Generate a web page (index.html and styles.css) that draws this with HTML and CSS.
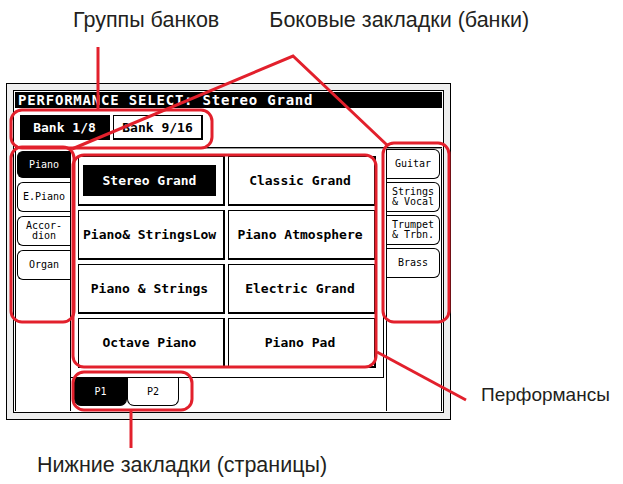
FILE: index.html
```html
<!DOCTYPE html>
<html lang="ru">

<head>
    <meta charset="UTF-8">
    <meta name="viewport" content="width=device-width, initial-scale=1.0">
    <title>Performance Select</title>
    <link rel="stylesheet" href="styles.css">
</head>

<body>
    <div class="page">
        <div class="top-labels">
            <span class="label label-groups">Группы банков</span>
            <span class="label label-side">Боковые закладки (банки)</span>
        </div>

        <div class="middle">
            <div class="screen">
                <div class="panel">
                    <div class="title">PERFORMANCE SELECT: Stereo Grand</div>

                    <div class="banks">
                        <div class="bank active">Bank 1/8</div>
                        <div class="bank">Bank 9/16</div>
                    </div>

                    <div class="body">
                        <div class="side side-left">
                            <div class="tab tab-first active">Piano</div>
                            <div class="tab">E.Piano</div>
                            <div class="tab">Accor-<br>dion</div>
                            <div class="tab">Organ</div>
                        </div>

                        <div class="main">
                            <div class="grid-wrap">
                                <div class="grid">
                                    <div class="cell selected"><span>Stereo Grand</span></div>
                                    <div class="cell"><span>Classic Grand</span></div>
                                    <div class="cell"><span>Piano&amp; StringsLow</span></div>
                                    <div class="cell"><span>Piano Atmosphere</span></div>
                                    <div class="cell"><span>Piano &amp; Strings</span></div>
                                    <div class="cell"><span>Electric Grand</span></div>
                                    <div class="cell"><span>Octave Piano</span></div>
                                    <div class="cell"><span>Piano Pad</span></div>
                                </div>
                            </div>
                            <div class="pages">
                                <div class="page-tab active">P1</div>
                                <div class="page-tab">P2</div>
                            </div>
                        </div>

                        <div class="side side-right">
                            <div class="tab">Guitar</div>
                            <div class="tab">Strings<br>&amp; Vocal</div>
                            <div class="tab">Trumpet<br>&amp; Trbn.</div>
                            <div class="tab">Brass</div>
                        </div>
                    </div>
                </div>
            </div>
            <span class="label label-perf">Перформансы</span>
        </div>

        <div class="bottom-label">
            <span class="label">Нижние закладки (страницы)</span>
        </div>

        <!-- red callouts drawn over the screen -->
        <svg class="callouts" viewBox="0 0 623 484" width="623" height="484">
            <line x1="98" y1="47" x2="98" y2="110" />
            <polyline points="72,149 293,56 387,145" />
            <rect x="11" y="110" width="201" height="38" rx="11" />
            <rect x="11" y="147" width="63" height="175" rx="11" />
            <rect x="383" y="143" width="66" height="179" rx="11" />
            <rect x="73" y="155" width="303" height="212" rx="11" />
            <rect x="73" y="372" width="119" height="38" rx="11" />
            <line x1="131" y1="410" x2="131" y2="448" />
            <line x1="377" y1="352" x2="466" y2="400" />
        </svg>
    </div>
</body>

</html>
```

FILE: styles.css
```css
body {
    margin: 0;
    background: #fff;
    font-family: "Liberation Sans", Arial, sans-serif;
}

.page {
    position: relative;
    width: 623px;
    height: 484px;
    overflow: hidden;
}

.label {
    font-size: 21.5px;
    line-height: 20px;
    color: #231f20;
    white-space: nowrap;
}

.top-labels {
    display: flex;
    height: 83px;
    box-sizing: border-box;
    padding: 10px 0 0 73px;
}

.label-side {
    margin-left: 50px;
}

.middle {
    display: flex;
    align-items: flex-start;
}

.label-perf {
    font-size: 19px;
    margin: 302px 0 0 30px;
}

.bottom-label {
    padding: 35px 0 0 37px;
}

/* LCD screen */

.screen {
    box-sizing: border-box;
    width: 445px;
    height: 337px;
    margin-left: 6px;
    padding: 6px;
    border: 1px solid #000;
    background: #eee;
}

.panel {
    box-sizing: border-box;
    height: 100%;
    padding: 1px;
    border: 1px solid #000;
    background: #fff;
    display: flex;
    flex-direction: column;
    font-family: "DejaVu Sans Mono", monospace;
    color: #000;
}

.title {
    height: 16px;
    padding-left: 3px;
    background: #000;
    color: #fff;
    font-size: 14px;
    font-weight: bold;
    line-height: 17px;
    letter-spacing: 0.8px;
    white-space: nowrap;
}

.banks {
    box-sizing: border-box;
    height: 40px;
    padding: 7px 0 0 5px;
    display: flex;
    gap: 3px;
    border-bottom: 1px solid #000;
    box-shadow: 0 1px 0 #999;
}

.bank {
    box-sizing: border-box;
    width: 90px;
    height: 25px;
    border: 1px solid #000;
    border-right-width: 2px;
    border-bottom-width: 2px;
    display: flex;
    align-items: center;
    justify-content: center;
    font-size: 13px;
    font-weight: bold;
}

.bank.active {
    background: #000;
    color: #fff;
}

.body {
    flex: 1;
    display: flex;
    margin-top: 1px;
}

.side {
    box-sizing: border-box;
    width: 56px;
    display: flex;
    flex-direction: column;
    border-left: 1px solid #000;
    border-right: 1px solid #000;
    font-size: 10px;
    line-height: 10px;
}

.side-left {
    gap: 4px;
    padding-top: 2px;
}

.side-right {
    gap: 3px;
}

.tab {
    box-sizing: border-box;
    height: 30px;
    border: 1px solid #000;
    display: flex;
    align-items: center;
    justify-content: center;
    text-align: center;
}

.side-left .tab {
    margin-left: 1px;
    border-right: none;
    border-radius: 6px 0 0 6px;
}

.side-left .tab-first {
    height: 27px;
}

.side-right .tab {
    margin-right: 1px;
    border-left: none;
    border-radius: 0 6px 6px 0;
}

.tab.active {
    background: #000;
    color: #fff;
}

.main {
    flex: 1;
    display: flex;
    flex-direction: column;
}

.grid-wrap {
    padding: 7px 6px 9px 7px;
    margin-right: 2px;
    border-right: 1px solid #000;
    border-bottom: 1px solid #000;
}

.grid {
    display: grid;
    grid-template-columns: 147px 148px;
    grid-auto-rows: 50px;
    gap: 4px 3px;
}

.cell {
    box-sizing: border-box;
    display: flex;
    padding: 8px 7px 8px 4px;
    border: 1px solid #000;
    border-right-width: 2px;
    border-bottom-width: 2px;
    font-size: 13px;
    font-weight: bold;
    white-space: nowrap;
}

.cell span {
    flex: 1;
    display: flex;
    align-items: center;
    justify-content: center;
}

.cell.selected span {
    background: #000;
    color: #fff;
}

.pages {
    display: flex;
    padding-left: 3px;
}

.page-tab {
    box-sizing: border-box;
    width: 52px;
    height: 28px;
    border: 1px solid #000;
    border-top: none;
    border-radius: 0 0 7px 7px;
    display: flex;
    align-items: center;
    justify-content: center;
    font-size: 10px;
}

.page-tab.active {
    width: 53px;
    background: #000;
    color: #fff;
}

/* annotation overlay */

.callouts {
    position: absolute;
    top: 0;
    left: 0;
    pointer-events: none;
    fill: none;
    stroke: #e2202c;
    stroke-width: 3;
}
```
